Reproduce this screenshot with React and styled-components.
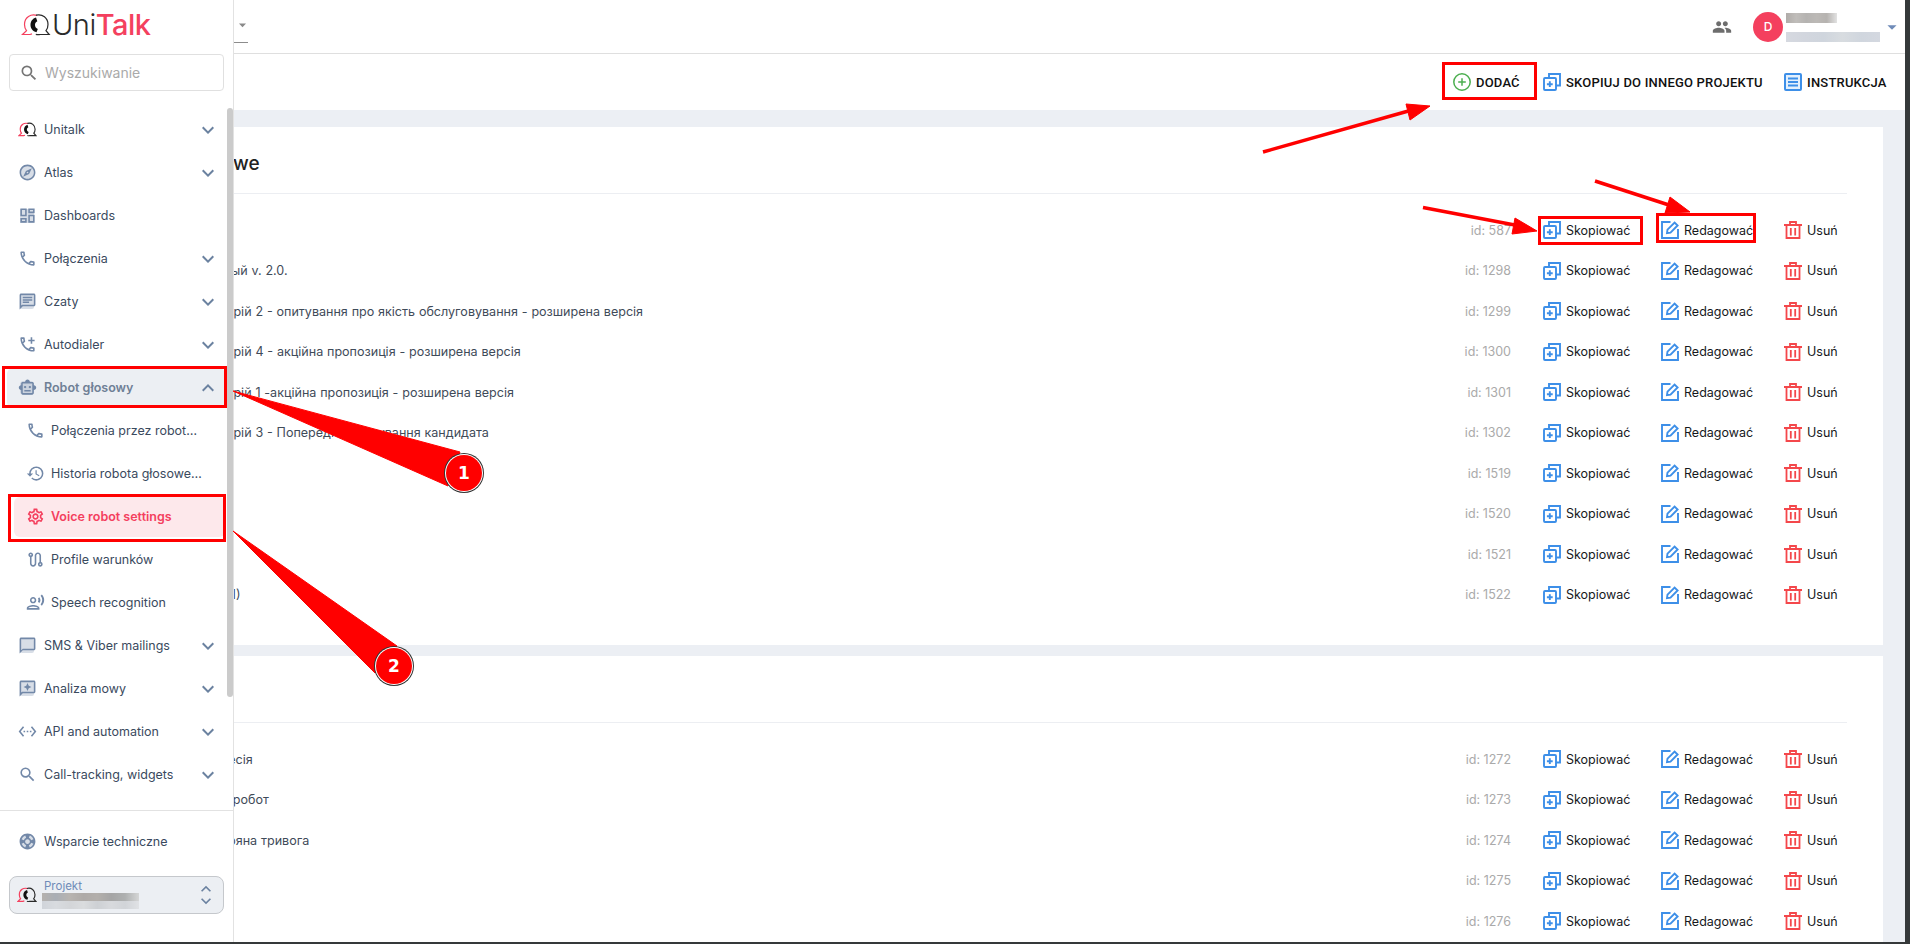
import React from 'react'
import styled, { createGlobalStyle } from 'styled-components'
import {
  MdSearch, MdOutlineExplore, MdOutlineDashboard, MdOutlineCall, MdOutlineChat, MdOutlineAddIcCall,
  MdOutlineSmartToy, MdHistory, MdOutlineSettings, MdOutlineRoute, MdOutlineRecordVoiceOver,
  MdOutlineChatBubbleOutline, MdOutlineReviews, MdSettingsEthernet, MdOutlineSupport, MdPeople,
  MdKeyboardArrowDown, MdKeyboardArrowUp, MdArrowDropDown,
} from 'react-icons/md'

const Global = createGlobalStyle`
  * { box-sizing: border-box; }
  html, body { margin: 0; padding: 0; overflow: hidden; }
  body { font-family: Inter, "Noto Sans", sans-serif; color: #3a4a5e; }
`

const Logo = ({ size = 30, line = 1.2 }) => (
  <svg width={size} height={size * 0.8} viewBox="0 0 30 24" fill="none">
    <path d="M16 2.5C10 .5 3.5 4 3.5 11.5c0 2.6.8 4.6 2 6.2L1.5 21.5H9l2-.6" stroke="#f4405e" strokeWidth={line} />
    <path d="M15 2.2c6.5-1.8 12 3 12 9.3 0 2.6-.8 4.6-2 6.2l3.2 3.8H19c-1.5.4-3 .2-4.2-.1" stroke="#2b2b2b" strokeWidth={line} />
    <path d="M15 4.5c-3.5 1-5.5 4-5.5 7.5 0 3.4 2.2 6.3 6 7.3l1.3-3.4c-1.7-.6-2.8-2.1-2.8-3.9 0-1.7.8-3 2.3-3.8z" fill="#111" />
  </svg>
)

const CopyIcon = () => (
  <svg width="18" height="18" viewBox="0 0 18 18" fill="none" stroke="#3d8fe8" strokeWidth="1.9">
    <path d="M6 5V1h11v11.500h-4" />
    <rect x="1" y="5" width="12" height="12" rx="1" />
    <path d="M6.800 8.300v5.800M3.900 11.200h5.800" />
  </svg>
)

const EditIcon = () => (
  <svg width="18" height="18" viewBox="0 0 18 18" fill="none" stroke="#3d8fe8" strokeWidth="1.9">
    <path d="M9.500 1H1v16h16V8" />
    <path d="M6 12.200l.5-3.500L13.600 1.500l3 3-7.100 7.200z" />
  </svg>
)

const TrashIcon = () => (
  <svg width="18" height="18" viewBox="0 0 18 18" fill="none" stroke="#f4474b" strokeWidth="1.8">
    <path d="M0 4h18M6 4V1h6v3M2.500 4v13h13V4M6.800 7v7.500M11.200 7v7.500" />
  </svg>
)

const PlusIcon = () => (
  <svg width="18" height="18" viewBox="0 0 18 18" fill="none" stroke="#4caf50" strokeWidth="1.5">
    <circle cx="9" cy="9" r="8.200" />
    <path d="M9 5.200v7.600M5.200 9h7.600" />
  </svg>
)

const DocIcon = () => (
  <svg width="18" height="18" viewBox="0 0 18 18" fill="none">
    <rect x="1" y="1" width="16" height="16" rx="1" fill="#e3f0fd" stroke="#3d8fe8" strokeWidth="2" />
    <path d="M4 5.500h10M4 9h10M4 12.500h10" stroke="#3d8fe8" strokeWidth="1.800" />
  </svg>
)

const NAV_TOP = [
  { icon: <Logo size={19} line={1.8} />, label: 'Unitalk', arrow: true },
  { icon: <MdOutlineExplore />, label: 'Atlas', arrow: true, tint: '50%' },
  { icon: <MdOutlineDashboard />, label: 'Dashboards', tint: '0' },
  { icon: <MdOutlineCall />, label: 'Połączenia', arrow: true },
  { icon: <MdOutlineChat />, label: 'Czaty', arrow: true, tint: '2px' },
  { icon: <MdOutlineAddIcCall />, label: 'Autodialer', arrow: true },
]

const NAV_SUB = [
  { icon: <MdOutlineCall />, label: 'Połączenia przez robot…' },
  { icon: <MdHistory />, label: 'Historia robota głosowe…' },
  { icon: <MdOutlineSettings />, label: 'Voice robot settings', current: true },
  { icon: <MdOutlineRoute />, label: 'Profile warunków' },
  { icon: <MdOutlineRecordVoiceOver />, label: 'Speech recognition' },
]

const NAV_BOTTOM = [
  { icon: <MdOutlineChatBubbleOutline />, label: 'SMS & Viber mailings', arrow: true, tint: '2px' },
  { icon: <MdOutlineReviews />, label: 'Analiza mowy', arrow: true, tint: '2px' },
  { icon: <MdSettingsEthernet />, label: 'API and automation', arrow: true },
  { icon: <MdSearch />, label: 'Call-tracking, widgets', arrow: true },
]

const FIRST = [
  ['Тест', 587],
  ['Базовый v. 2.0.', 1298],
  ['Сценарій 2 - опитування про якість обслуговування - розширена версія', 1299],
  ['Сценарій 4 - акційна пропозиція - розширена версія', 1300],
  ['Сценарій 1 -акційна пропозиція - розширена версія', 1301],
  ['Сценарій 3 - Попереднє опитування кандидата', 1302],
  ['Тест', 1519],
  ['Лід', 1520],
  ['Тест', 1521],
  ['Тест (1)', 1522],
]

const SECOND = [
  ['Професія', 1272],
  ['Відео робот', 1273],
  ['Повітряна тривога', 1274],
  ['Візити', 1275],
  ['Тест', 1276],
]

const NavItem = ({ item, sub }) => (
  <NavRow $sub={sub} $current={item.current}>
    <NavIcon $tint={item.tint} $current={item.current}>{item.icon}</NavIcon>
    <NavLabel>{item.label}</NavLabel>
    {item.arrow && <Chevron><MdKeyboardArrowDown /></Chevron>}
  </NavRow>
)

const Rows = ({ data }) => (
  <List>
    {data.map(([name, id]) => (
      <Row key={id}>
        <Name>{name}</Name>
        <Id>id: {id}</Id>
        <Action><CopyIcon />Skopiować</Action>
        <Action><EditIcon />Redagować</Action>
        <Action><TrashIcon />Usuń</Action>
      </Row>
    ))}
  </List>
)

export default function App() {
  return (
    <Screen>
      <Global />
      <Window>
        <Sidebar>
          <Brand>
            <Logo />
            <BrandText>Uni<b>Talk</b></BrandText>
          </Brand>
          <Search>
            <MdSearch />
            <span>Wyszukiwanie</span>
          </Search>
          <Nav>
            {NAV_TOP.map((item) => <NavItem key={item.label} item={item} />)}
            <NavRow $open>
              <NavIcon $tint="4px"><MdOutlineSmartToy /></NavIcon>
              <NavLabel>Robot głosowy</NavLabel>
              <Chevron><MdKeyboardArrowUp /></Chevron>
            </NavRow>
            {NAV_SUB.map((item) => <NavItem key={item.label} item={item} sub />)}
            {NAV_BOTTOM.map((item) => <NavItem key={item.label} item={item} />)}
            <Thumb />
          </Nav>
          <SideFooter>
            <NavRow>
              <NavIcon $tint="50%"><MdOutlineSupport /></NavIcon>
              <NavLabel>Wsparcie techniczne</NavLabel>
            </NavRow>
            <Project>
              <Logo size={20} line={1.8} />
              <ProjectInfo>
                <ProjectLabel>Projekt</ProjectLabel>
                <Blur $w={97} $h={8} $colors={['#b5b1ad', '#a9aeb5', '#b8b4b0', '#aeaaa7', '#b3afab', '#a5a5a5', '#aeb0b0', '#d5d6d6']} />
                <Blur $w={97} $h={8} $colors={['#d0d4da', '#d8dbdf', '#d3d5d8', '#dadcde', '#cdd0d4', '#d8dadd', '#d1d4d8', '#e0e2e5']} />
              </ProjectInfo>
              <UpDown>
                <MdKeyboardArrowUp />
                <MdKeyboardArrowDown />
              </UpDown>
            </Project>
          </SideFooter>
        </Sidebar>

        <Main>
          <Header>
            <Select><MdArrowDropDown /></Select>
            <Account>
              <People><MdPeople /></People>
              <Avatar>D</Avatar>
              <AccountText>
                <Blur $w={51} $h={10} $colors={['#b0aca9', '#c0bdba', '#b5b3b1', '#bcb9b6', '#b6b3b0', '#e2e2e2']} />
                <Blur $w={94} $h={10} $colors={['#d6d9e0', '#d2d6de', '#cfd5dd', '#d8dce0', '#d0d6de', '#d4d8e0']} />
              </AccountText>
              <Caret><MdArrowDropDown /></Caret>
            </Account>
          </Header>
          <Toolbar>
            <ToolButton $w={90}><PlusIcon />DODAĆ</ToolButton>
            <ToolButton $w={241}><CopyIcon />SKOPIUJ DO INNEGO PROJEKTU</ToolButton>
            <ToolButton $w={103}><DocIcon />INSTRUKCJA</ToolButton>
          </Toolbar>
          <Content>
            <Card $h={518}>
              <CardTitle>Gotowe</CardTitle>
              <Rows data={FIRST} />
            </Card>
            <Card>
              <CardTitle />
              <Rows data={SECOND} />
            </Card>
          </Content>
        </Main>

        <Arrows viewBox="0 0 1905 942">
          <g fill="#ff0000" stroke="#ff0000">
            <path d="M1263 152L1412 110" strokeWidth="3.5" />
            <polygon points="1430,106 1406,104 1410,120" />
            <path d="M1423 207.5L1520 226" strokeWidth="3.5" />
            <polygon points="1537,231 1515,218 1512,234" />
            <path d="M1595 181L1672 206" strokeWidth="3.5" />
            <polygon points="1690,212 1670,197 1665,213" />
            <polygon points="233,391 460,452 448,486" />
            <polygon points="233,531 397,646 375,673" />
          </g>
        </Arrows>
        <Mark $x={1442} $y={62} $w={95} $h={38} />
        <Mark $x={1538} $y={216} $w={105} $h={29} />
        <Mark $x={1656} $y={213} $w={100} $h={30} />
        <Mark $x={2} $y={366} $w={225} $h={42} />
        <Mark $x={8} $y={494} $w={218} $h={48} />
        <Badge $x={464} $y={473}>1</Badge>
        <Badge $x={394} $y={666}>2</Badge>
      </Window>
    </Screen>
  )
}

const Screen = styled.div`
  width: 1910px;
  height: 944px;
  padding: 0 5px 2px 0;
  background: #35393a;
`
const Window = styled.div`
  position: relative;
  height: 100%;
  overflow: hidden;
  background: #fff;
`

const Sidebar = styled.aside`
  position: absolute;
  top: 0;
  bottom: 0;
  left: 0;
  z-index: 2;
  width: 234px;
  display: flex;
  flex-direction: column;
  background: #fff;
  border-right: 1px solid #e2e2e2;
`
const Brand = styled.div`
  height: 54px;
  flex: none;
  padding: 0 0 5px 21px;
  display: flex;
  align-items: center;
  gap: 1px;
`
const BrandText = styled.div`
  font-size: 29px;
  font-weight: 300;
  color: #2b2b2b;
  letter-spacing: -0.5px;
  b { font-weight: 500; color: #f4405e; }
`
const Search = styled.div`
  flex: none;
  height: 37px;
  margin: 0 9px;
  padding-left: 9px;
  display: flex;
  align-items: center;
  gap: 6px;
  border: 1px solid #e0e0e0;
  border-radius: 4px;
  font-size: 14px;
  color: #aaa;
  svg { font-size: 20px; color: #757575; }
`
const Nav = styled.nav`
  position: relative;
  flex: 1;
  margin-top: 17px;
  padding-top: 1.5px;
  overflow: hidden;
  display: grid;
  grid-auto-rows: 40px;
  row-gap: 3px;
  align-content: start;
`
const Thumb = styled.div`
  position: absolute;
  top: 0;
  right: 0;
  width: 6px;
  height: 589px;
  background: #cbcbcb;
  border-radius: 3px;
`
const NavRow = styled.div`
  height: 40px;
  margin: 0 8px 0 ${(p) => (p.$sub ? 14 : 7)}px;
  padding: 0 5px 0 ${(p) => (p.$sub ? 12 : 11)}px;
  display: flex;
  align-items: center;
  gap: ${(p) => (p.$sub ? 7 : 8)}px;
  border-radius: 6px;
  font-size: 12.5px;
  color: ${(p) => (p.$current ? '#f4405e' : p.$open ? '#6f8096' : '#3a4a5e')};
  font-weight: ${(p) => (p.$current || p.$open ? 600 : 400)};
  background: ${(p) => (p.$current ? '#fde8eb' : p.$open ? '#eceff3' : 'transparent')};
`
const NavIcon = styled.span`
  position: relative;
  flex: none;
  width: 18px;
  height: 18px;
  display: flex;
  align-items: center;
  justify-content: center;
  font-size: 19px;
  color: ${(p) => (p.$current ? '#f4405e' : '#7288a8')};
  &::before {
    content: '';
    display: ${(p) => (p.$tint ? 'block' : 'none')};
    position: absolute;
    inset: 2px;
    border-radius: ${(p) => p.$tint};
    background: rgba(114, 136, 168, 0.28);
  }
  svg { position: relative; flex: none; }
`
const NavLabel = styled.span`
  white-space: nowrap;
`
const Chevron = styled.span`
  margin-left: auto;
  display: flex;
  font-size: 24px;
  color: #6b82a0;
`
const SideFooter = styled.div`
  flex: none;
  height: 132px;
  padding-top: 10px;
  border-top: 1px solid #e2e2e2;
`
const Project = styled.div`
  height: 38px;
  margin: 15px 9px 0;
  padding: 0 4px 0 7px;
  display: flex;
  align-items: center;
  gap: 5px;
  background: #eceff3;
  border: 1px solid #c5c8cc;
  border-radius: 8px;
`
const ProjectInfo = styled.div`
  flex: 1;
  margin-top: -2px;
  display: flex;
  flex-direction: column;
`
const ProjectLabel = styled.span`
  font-size: 11.5px;
  line-height: 14px;
  margin-left: 2px;
  color: #6f8bb8;
`
const UpDown = styled.div`
  width: 20px;
  margin-right: 3px;
  display: flex;
  flex-direction: column;
  align-items: center;
  font-size: 20px;
  color: #6b82a0;
  svg { margin: -4px 0; }
`
const Blur = styled.div`
  width: ${(p) => p.$w}px;
  height: ${(p) => p.$h}px;
  filter: blur(0.5px);
  background: ${(p) => `linear-gradient(90deg, ${p.$colors.join(', ')})`};
`

const Main = styled.main`
  height: 100%;
  display: flex;
  flex-direction: column;
`
const Header = styled.header`
  flex: none;
  height: 54px;
  padding-left: 234px;
  display: flex;
  align-items: flex-start;
  justify-content: space-between;
  border-bottom: 1px solid #dfdfdf;
`
const Select = styled.div`
  width: 14px;
  height: 43px;
  padding-top: 16px;
  border-bottom: 1px solid #8c8c8c;
  display: flex;
  justify-content: flex-end;
  font-size: 18px;
  color: #8a8a8a;
  svg { margin-right: -3px; }
`
const Account = styled.div`
  height: 53px;
  padding-right: 2px;
  display: flex;
  align-items: center;
`
const People = styled.span`
  display: flex;
  margin-right: 21px;
  font-size: 20px;
  color: #6d6d6d;
`
const Avatar = styled.div`
  width: 30px;
  height: 30px;
  margin-right: 3px;
  border-radius: 50%;
  display: flex;
  align-items: center;
  justify-content: center;
  background: #f4405e;
  color: #fff;
  font-size: 12px;
  font-weight: 500;
`
const AccountText = styled.div`
  width: 95px;
  display: flex;
  flex-direction: column;
  gap: 9px;
  margin-top: 2px;
`
const Caret = styled.span`
  display: flex;
  font-size: 22px;
  color: #6f8bb8;
`
const Toolbar = styled.div`
  flex: none;
  height: 56px;
  padding-right: 18px;
  display: flex;
  justify-content: flex-end;
  align-items: center;
  background: #fff;
`
const ToolButton = styled.div`
  flex: none;
  width: ${(p) => p.$w}px;
  display: flex;
  align-items: center;
  gap: 5px;
  white-space: nowrap;
  font-family: Roboto, sans-serif;
  font-size: 13px;
  font-weight: 500;
  letter-spacing: 0.2px;
  color: #111;
  svg { flex: none; }
`
const Content = styled.div`
  flex: 1;
  min-height: 0;
  padding: 17px 22px 0 150px;
  display: flex;
  flex-direction: column;
  gap: 11px;
  background: #eceff4;
`
const Card = styled.section`
  flex: none;
  ${(p) => p.$h && `height: ${p.$h}px;`}
  padding: 0 36px 30px 45px;
  background: #fff;
`
const CardTitle = styled.h2`
  height: 67px;
  margin: 0 0 0 -5px;
  padding-top: 24px;
  border-bottom: 1px solid #eceef2;
  font-size: 19px;
  line-height: 26px;
  font-weight: 500;
  color: #222;
`
const List = styled.div`
  padding-top: 16px;
`
const Row = styled.div`
  height: 40.5px;
  display: grid;
  grid-template-columns: 1fr auto 118px 123px 63px;
  align-items: center;
`
const Name = styled.span`
  font-size: 12.55px;
  word-spacing: 0.3px;
  color: #3f4b59;
  white-space: nowrap;
`
const Id = styled.span`
  margin-right: 32px;
  font-size: 12.5px;
  color: #aaa;
`
const Action = styled.span`
  display: flex;
  align-items: center;
  gap: 5px;
  font-size: 12.5px;
  color: #16181c;
  white-space: nowrap;
  svg { flex: none; }
`

const Arrows = styled.svg`
  position: absolute;
  top: 0;
  left: 0;
  z-index: 3;
  width: 1905px;
  height: 942px;
  pointer-events: none;
`
const Mark = styled.div`
  position: absolute;
  z-index: 3;
  left: ${(p) => p.$x}px;
  top: ${(p) => p.$y}px;
  width: ${(p) => p.$w}px;
  height: ${(p) => p.$h}px;
  border: 3px solid #ff0000;
  pointer-events: none;
`
const Badge = styled.div`
  position: absolute;
  z-index: 4;
  left: ${(p) => p.$x - 18}px;
  top: ${(p) => p.$y - 18}px;
  width: 36px;
  height: 36px;
  border-radius: 50%;
  display: flex;
  align-items: center;
  justify-content: center;
  background: #ff0000;
  color: #fff;
  font-family: "DejaVu Sans", sans-serif;
  font-size: 17px;
  font-weight: 700;
  box-shadow: 0 0 0 1px #fff, 0 0 0 2px #333;
`
